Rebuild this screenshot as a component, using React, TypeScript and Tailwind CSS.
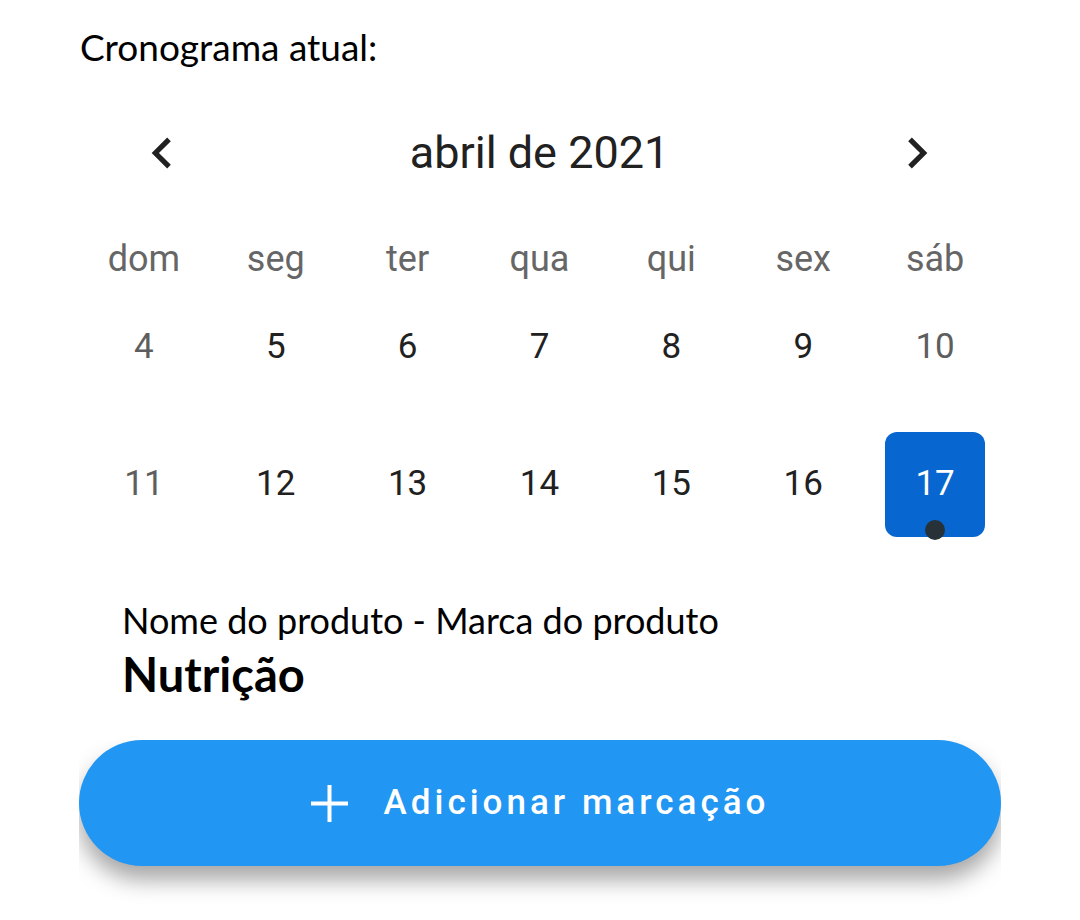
import { ChevronLeft, ChevronRight } from 'lucide-react'

const weekDays = ['dom', 'seg', 'ter', 'qua', 'qui', 'sex', 'sáb']

const weeks = [
    [4, 5, 6, 7, 8, 9, 10],
    [11, 12, 13, 14, 15, 16, 17],
]

const selectedDay = 17

function ChevronIcon({ dir }: { dir: 'left' | 'right' }) {
    // material chevron, 24 viewBox
    return (
        <svg width="62" height="62" viewBox="0 0 24 24" fill="#212121">
            {dir === 'left' ? (
                <path d="M15.41 7.41L14 6l-6 6 6 6 1.41-1.41L10.83 12z" />
            ) : (
                <path d="M10 6L8.59 7.41 13.17 12l-4.58 4.59L10 18l6-6z" />
            )}
        </svg>
    )
}

function DayCell({ day, col }: { day: number; col: number }) {
    const isWeekend = col === 0 || col === 6
    const isSelected = day === selectedDay

    if (isSelected) {
        return (
            <div className="flex items-center justify-center h-[137px]">
                <div className="relative w-[100px] h-[105px] bg-[#0866d0] rounded-[12px] flex items-center justify-center">
                    <span className="text-[35px] text-white">{day}</span>
                    <span className="absolute left-1/2 -translate-x-1/2 bottom-[-3px] w-[20px] h-[20px] rounded-full bg-[#263238]" />
                </div>
            </div>
        )
    }

    return (
        <div className="flex items-center justify-center h-[137px]">
            <span className={`text-[35px] ${isWeekend ? 'text-[#5e5e5e]' : 'text-[#212121]'}`}>{day}</span>
        </div>
    )
}

export default function App() {
    return (
        <div className="w-[1080px] h-[920px] bg-white overflow-hidden font-['Lato',sans-serif]">
            {/* Title */}
            <p className="pl-[80px] pt-[27px] text-[37px] leading-[40px] text-black">Cronograma atual:</p>

            {/* Calendar */}
            <div className="ml-[78px] w-[923px] font-['Roboto',sans-serif]">
                <div className="flex items-center justify-between px-[53px] mt-[55px] h-[62px]">
                    <ChevronIcon dir="left" />
                    <span className="text-[45px] text-[#212121]">abril de 2021</span>
                    <ChevronIcon dir="right" />
                </div>

                <div className="grid grid-cols-7 mt-[55px]">
                    {weekDays.map((d) => (
                        <div key={d} className="flex items-center justify-center h-[40px] text-[36px] text-[#666666]">
                            {d}
                        </div>
                    ))}
                </div>

                <div>
                    {weeks.map((week, i) => (
                        <div key={i} className="grid grid-cols-7">
                            {week.map((day, col) => (
                                <DayCell key={day} day={day} col={col} />
                            ))}
                        </div>
                    ))}
                </div>
            </div>

            {/* Product */}
            <div className="pl-[122px] mt-[47px]">
                <p className="text-[36px] leading-[40px] text-black">Nome do produto - Marca do produto</p>
                <p className="text-[47px] leading-[50px] mt-[9px] font-bold text-black">Nutrição</p>
            </div>

            {/* Button */}
            <div className="ml-[79px] w-[922px] mt-[41px] overflow-hidden pb-[50px]">
                <button className="w-full h-[126px] rounded-full bg-[#2196f3] flex items-center justify-center gap-[36px] shadow-[0_14px_22px_rgba(0,0,0,0.35)]">
                    <svg width="37" height="37" viewBox="0 0 37 37">
                        <rect x="16.5" y="0" width="4" height="37" fill="white" />
                        <rect x="0" y="16.5" width="37" height="4" fill="white" />
                    </svg>
                    <span className="font-['Roboto',sans-serif] font-medium text-[35px] tracking-[4px] text-white">
                        Adicionar marcação
                    </span>
                </button>
            </div>
        </div>
    )
}
